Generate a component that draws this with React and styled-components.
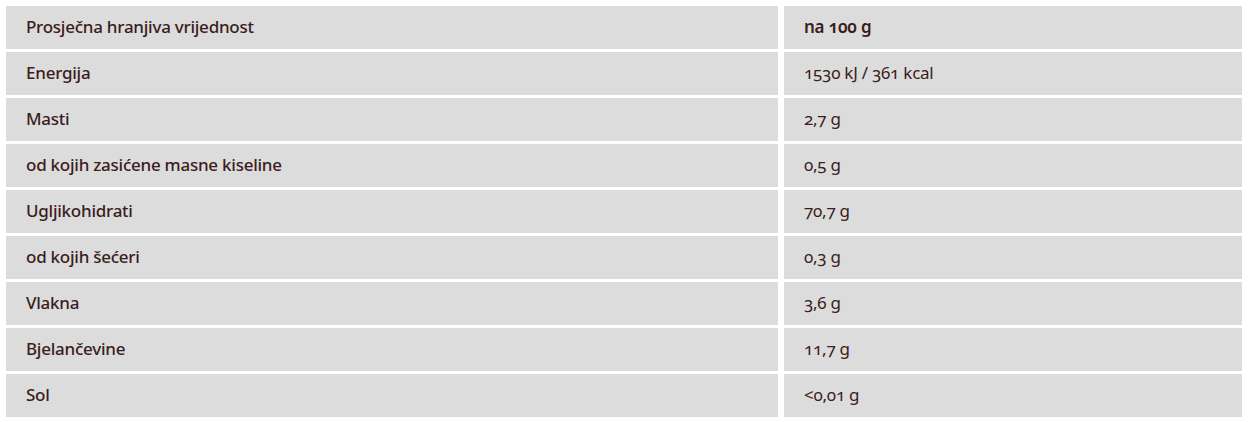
import React from "react";
import styled, { createGlobalStyle } from "styled-components";

const GlobalStyle = createGlobalStyle`
    body {
        margin: 0;
        background: #ffffff;
        font-family: "Noto Sans", "Open Sans", sans-serif;
    }
`;

const TableStyles = styled.div`
    display: grid;
    grid-template-columns: 772px 458px;
    column-gap: 6px;
    row-gap: 3px;
    padding: 6px;
    width: 1236px;
    box-sizing: border-box;
`;

const Cell = styled.div`
    height: 43px;
    display: flex;
    align-items: center;
    padding: 0 20px 2px;
    background: #dcdcdc;
    color: #3b1c20;
    font-size: 17px;
    font-weight: ${(props) => props.$weight || 500};
    font-variant-numeric: oldstyle-nums;
    letter-spacing: -0.25px;
    box-sizing: border-box;
`;

const rows = [
    ["Energija", "1530 kJ / 361 kcal"],
    ["Masti", "2,7 g"],
    ["od kojih zasićene masne kiseline", "0,5 g"],
    ["Ugljikohidrati", "70,7 g"],
    ["od kojih šećeri", "0,3 g"],
    ["Vlakna", "3,6 g"],
    ["Bjelančevine", "11,7 g"],
    ["Sol", "<0,01 g"],
];

const App = () => {
    return (
        <>
            <GlobalStyle />
            <TableStyles>
                <Cell>Prosječna hranjiva vrijednost</Cell>
                <Cell $weight={600}>na 100 g</Cell>
                {rows.map(([name, value]) => (
                    <React.Fragment key={name}>
                        <Cell>{name}</Cell>
                        <Cell $weight={400}>{value}</Cell>
                    </React.Fragment>
                ))}
            </TableStyles>
        </>
    );
};

export default App;
